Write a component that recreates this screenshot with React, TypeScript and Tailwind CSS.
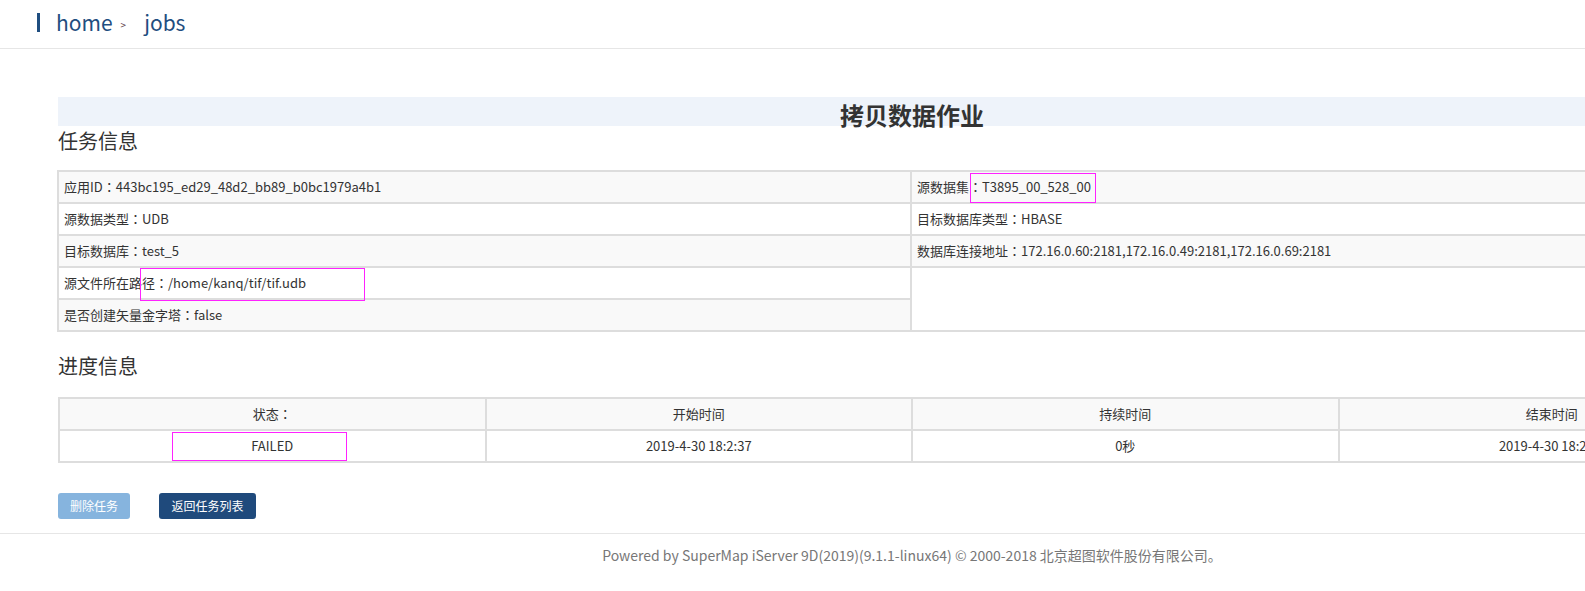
import React from "react";

const FONT = { fontFamily: '"Noto Sans CJK SC", "Noto Sans", sans-serif' };
// centred full-width colon, like the original page's font
const CELL_FONT = { fontFamily: '"Noto Sans CJK TC", "Noto Sans CJK SC", sans-serif' };

const infoRows = [
  { left: "应用ID：443bc195_ed29_48d2_bb89_b0bc1979a4b1", right: "源数据集：T3895_00_528_00" },
  { left: "源数据类型：UDB", right: "目标数据库类型：HBASE" },
  { left: "目标数据库：test_5", right: "数据库连接地址：172.16.0.60:2181,172.16.0.49:2181,172.16.0.69:2181" },
  { left: "源文件所在路径：/home/kanq/tif/tif.udb" },
  { left: "是否创建矢量金字塔：false" },
];

const progressHead = ["状态：", "开始时间", "持续时间", "结束时间"];
const progressData = ["FAILED", "2019-4-30 18:2:37", "0秒", "2019-4-30 18:2:37"];

export default function App() {
  return (
    <div className="w-full overflow-hidden bg-white text-[#333]" style={FONT}>
      <div className="w-[1824px]">
        {/* Header / breadcrumb */}
        <div className="h-[49px] border-b border-[#e6e6e6] flex items-center pl-[37px] pb-[3px]">
          <span className="w-[3px] h-[19px] bg-[#1f4e80]" />
          <span className="ml-[16px] text-[21px] text-[#1f4e80] leading-none">home</span>
          <span className="ml-[8px] text-[10px] text-[#5a3a4a] mt-[4px]">&gt;</span>
          <span className="ml-[18px] text-[21px] text-[#1f4e80] leading-none">jobs</span>
        </div>

        <div className="px-[58px] pt-[48px]">
          {/* Title band */}
          <div className="h-[29px] bg-[#eef3fa] text-center">
            <h1 className="text-[24px] font-bold leading-[36px] text-[#333]">拷贝数据作业</h1>
          </div>

          <h2 className="text-[20px] leading-[30px] text-[#333]">任务信息</h2>

          <table className="mt-[14px] w-full border-collapse text-[13px] ml-[-1px]" style={CELL_FONT}>
            <tbody>
              {infoRows.map((r, i) => (
                <tr key={i} className={i % 2 === 0 ? "bg-[#f9f9f9]" : "bg-white"}>
                  <td className="relative w-1/2 h-[32px] border-2 border-[#dddddd] px-[5px] align-middle">
                    {r.left}
                    {i === 3 && (
                      <span className="absolute left-[81px] top-[0px] w-[225px] h-[33px] border border-[#ff22ff]" />
                    )}
                  </td>
                  {i < 3 && (
                    <td className="relative w-1/2 h-[32px] border-2 border-[#dddddd] px-[5px] align-middle">
                      {r.right}
                      {i === 0 && (
                        <span className="absolute left-[58px] top-[1px] w-[126px] h-[30px] border border-[#ff22ff]" />
                      )}
                    </td>
                  )}
                  {i === 3 && <td rowSpan={2} className="w-1/2 border-2 border-[#dddddd] bg-white" />}
                </tr>
              ))}
            </tbody>
          </table>

          <h2 className="mt-[19px] text-[20px] leading-[30px] text-[#333]">进度信息</h2>

          <table className="mt-[16px] w-full border-collapse text-[13px] text-center table-fixed" style={CELL_FONT}>
            <tbody>
              <tr className="bg-[#f9f9f9]">
                {progressHead.map((h) => (
                  <td key={h} className="h-[32px] border-2 border-[#dddddd] align-middle">
                    {h}
                  </td>
                ))}
              </tr>
              <tr className="bg-white">
                {progressData.map((d, i) => (
                  <td key={i} className="relative h-[32px] border-2 border-[#dddddd] align-middle">
                    {d}
                    {i === 0 && (
                      <span className="absolute left-[112px] top-[1px] w-[175px] h-[29px] border border-[#ff22ff]" />
                    )}
                  </td>
                ))}
              </tr>
            </tbody>
          </table>

          {/* Buttons */}
          <div className="mt-[30px] flex gap-[29px]">
            <button className="h-[26px] w-[72px] rounded-[3px] bg-[#86b4de] text-white text-[12px]">
              删除任务
            </button>
            <button className="h-[26px] w-[97px] rounded-[3px] bg-[#1f4a7c] text-white text-[12px]">
              返回任务列表
            </button>
          </div>
        </div>

        {/* Footer */}
        <div className="mt-[14px] border-t border-[#e6e6e6] pt-[11px] pb-[20px] text-center text-[14px] text-[#777]">
          Powered by SuperMap iServer 9D(2019)(9.1.1-linux64) © 2000-2018 北京超图软件股份有限公司。
        </div>
      </div>
    </div>
  );
}
